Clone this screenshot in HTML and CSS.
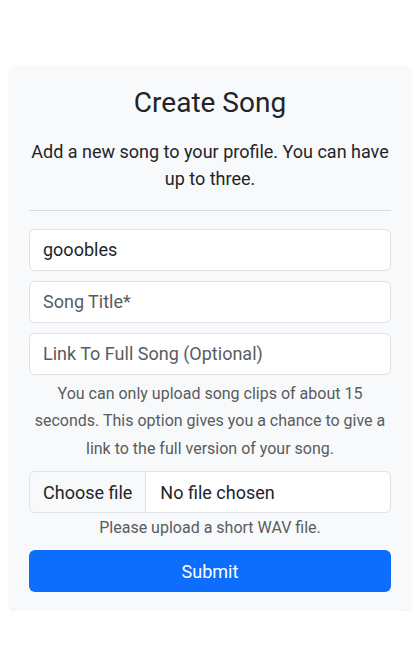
FILE: index.html
```html
<!DOCTYPE html>
<html lang="en">
<head>
<meta charset="utf-8">
<title>Create Song</title>
<link rel="stylesheet" href="styles.css">
</head>
<body>
<main class="page">
  <form class="card">
    <h3 class="title">Create Song</h3>
    <p class="lead">Add a new song to your profile. You can have up to three.</p>
    <hr class="divider">
    <div class="fields">
      <input class="field" type="text" value="gooobles">
      <input class="field" type="text" placeholder="Song Title*">
      <input class="field" type="text" placeholder="Link To Full Song (Optional)">
    </div>
    <p class="help">You can only upload song clips of about 15 seconds. This option gives you a chance to give a link to the full version of your song.</p>
    <div class="file">
      <span class="file-btn">Choose file</span>
      <span class="file-name">No file chosen</span>
    </div>
    <p class="note">Please upload a short WAV file.</p>
    <button class="submit" type="button">Submit</button>
  </form>
</main>
</body>
</html>
```

FILE: styles.css
```css
* { box-sizing: border-box; }
html, body { margin: 0; padding: 0; background: #fff; }
body {
  font-family: Roboto, "Liberation Sans", sans-serif;
  color: #212529;
}
.page {
  padding: 66px 9px 0 10px;
}
.card {
  width: 400px;
  background: #f8f9fa;
  border-radius: 8px;
  box-shadow: 0 .125rem .25rem rgba(0,0,0,.075);
  padding: 20px 19px 19px 19px;
  display: flex;
  flex-direction: column;
}
.title {
  margin: 0;
  font-size: 28px;
  font-weight: 400;
  line-height: 1.2;
  text-align: center;
}
.lead {
  margin: 18px 0 0;
  font-size: 18px;
  line-height: 27px;
  text-align: center;
}
.divider {
  margin: 18px 0 0;
  border: 0;
  border-top: 1px solid #d7d9db;
  height: 0;
}
.fields {
  margin-top: 18px;
  display: flex;
  flex-direction: column;
  gap: 10px;
}
.field {
  display: block;
  width: 100%;
  height: 42px;
  padding: 6px 13px;
  font-family: inherit;
  font-size: 18px;
  color: #212529;
  background: #fff;
  border: 1px solid #dee2e6;
  border-radius: 6px;
  outline: none;
}
.field::placeholder { color: #595c5f; opacity: 1; }
.help {
  margin: 5px 0 0;
  font-size: 16px;
  line-height: 27.5px;
  color: #595c5f;
  text-align: center;
}
.file {
  margin-top: 9px;
  display: flex;
  height: 42px;
  border: 1px solid #dee2e6;
  border-radius: 6px;
  background: #fff;
  overflow: hidden;
  font-size: 18px;
}
.file-btn {
  display: flex;
  align-items: center;
  padding: 0 13px;
  background: #f8f9fa;
  border-right: 1px solid #dee2e6;
  color: #212529;
}
.file-name {
  display: flex;
  align-items: center;
  padding: 0 14px;
}
.note {
  margin: 3px 0 0;
  font-size: 16px;
  line-height: 24px;
  color: #595c5f;
  text-align: center;
}
.submit {
  margin-top: 10px;
  height: 42px;
  width: 100%;
  border: 0;
  border-radius: 6px;
  background: #0d6efd;
  color: #fff;
  font-family: inherit;
  font-size: 18px;
  cursor: pointer;
}
```
